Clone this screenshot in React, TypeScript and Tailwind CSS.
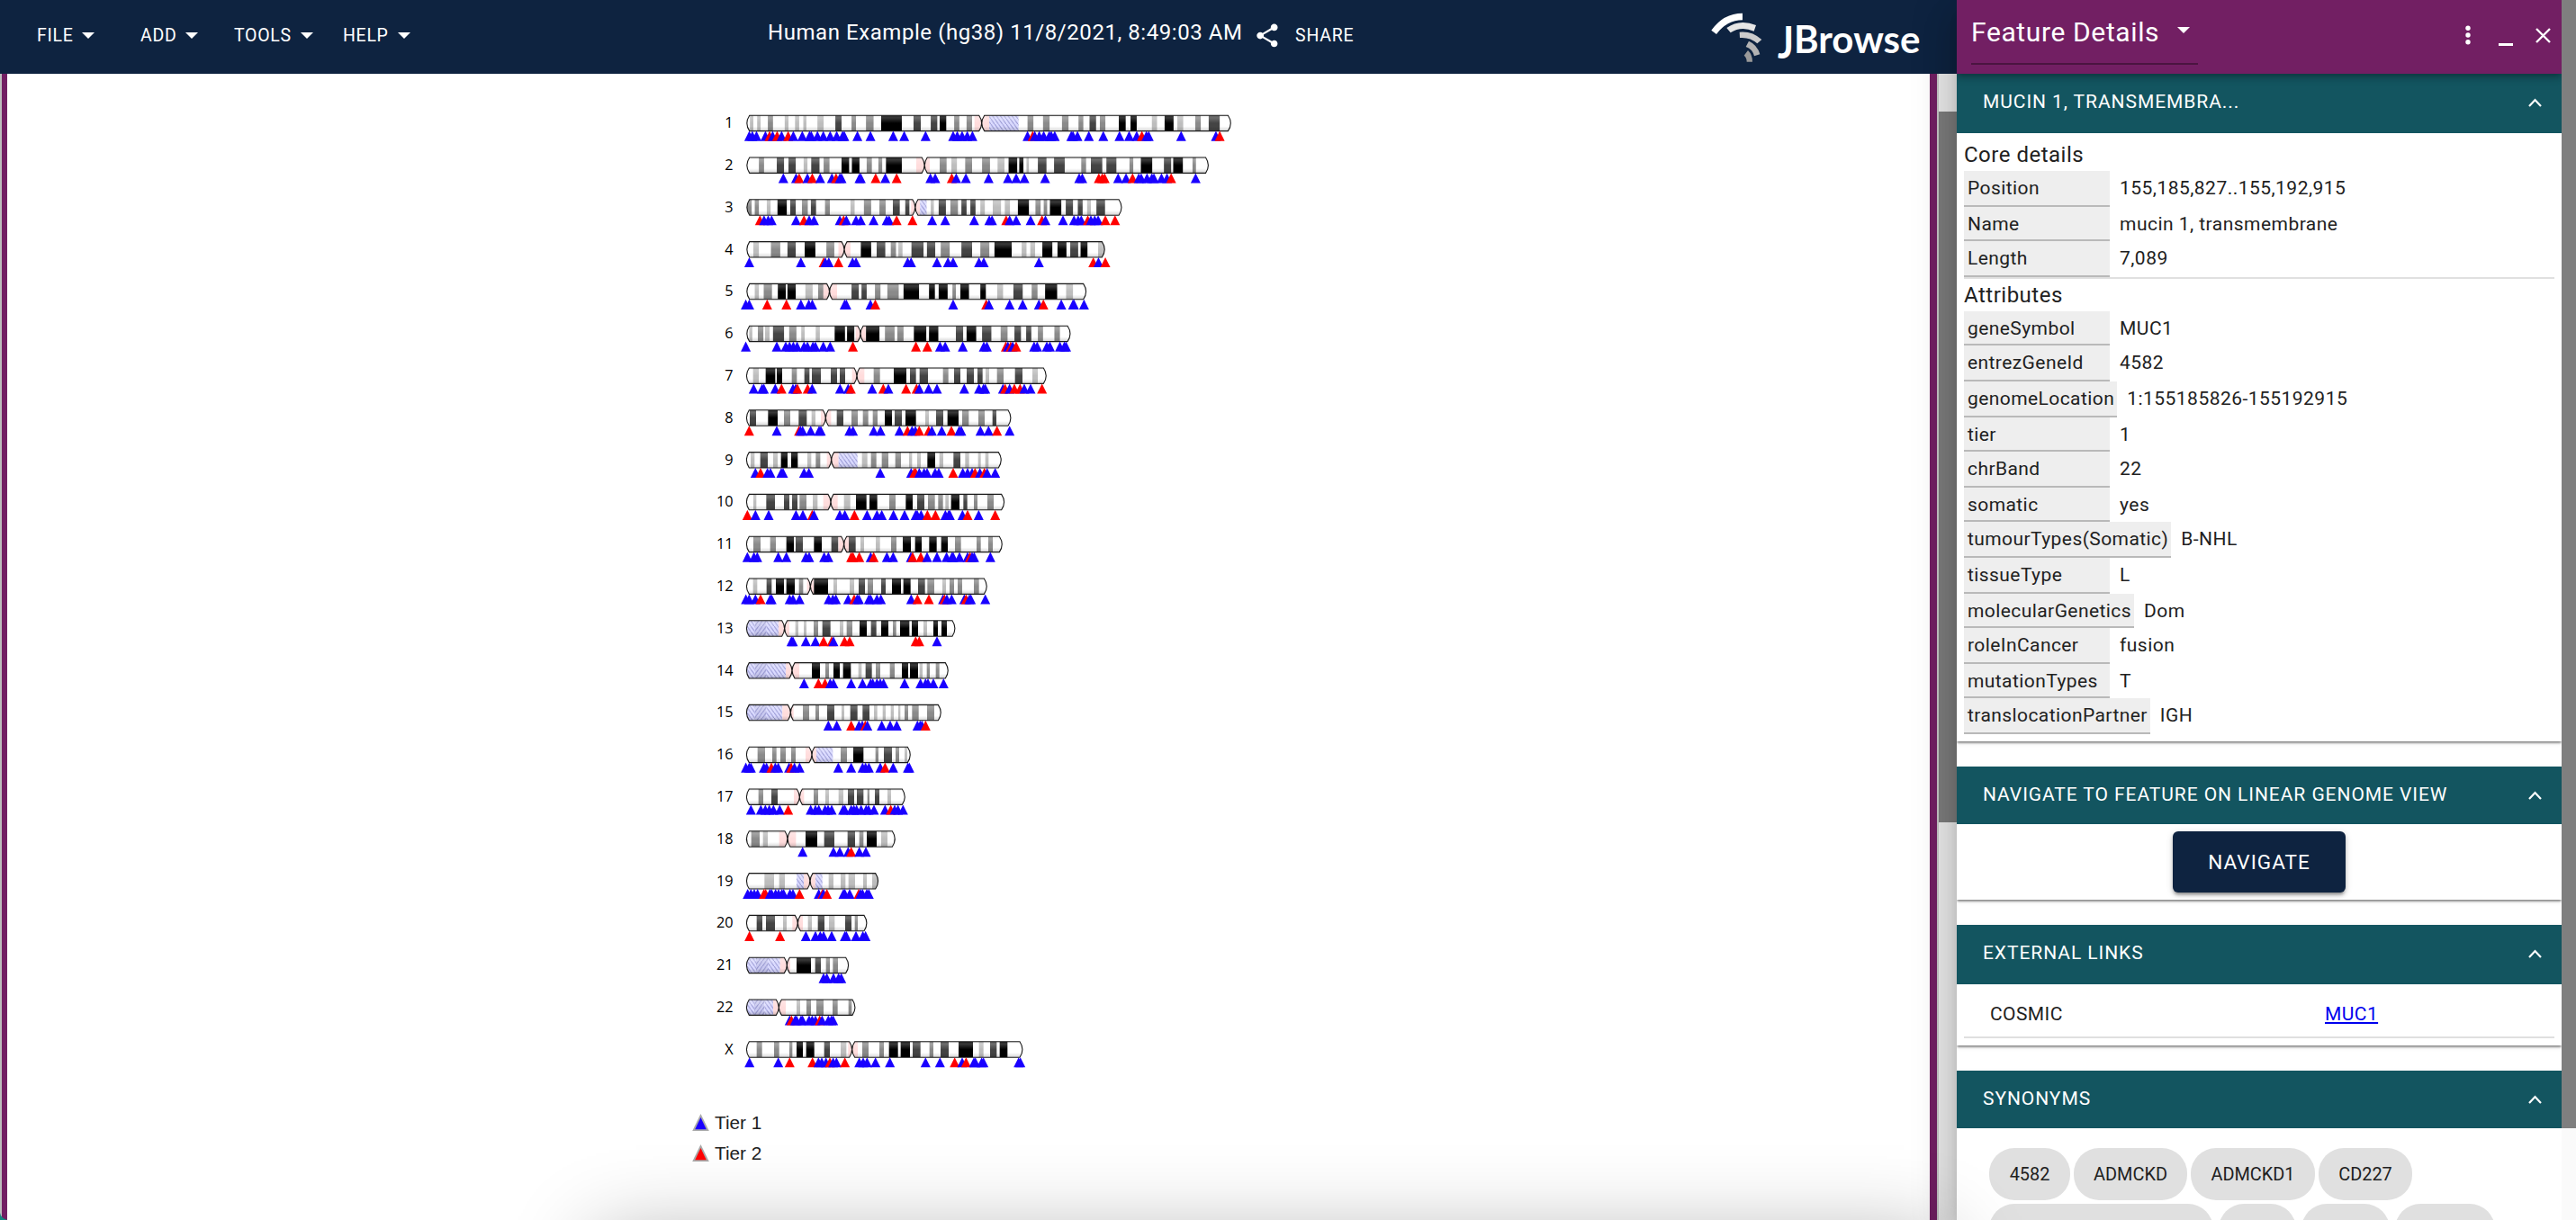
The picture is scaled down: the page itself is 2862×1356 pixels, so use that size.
import React from "react";

type Chromosome = {
  name: string;
  origin: number;
  scale: number;
  start: number;
  centromere: number;
  end: number;
  bands: string;
  marks: string;
};

const chr = (
  name: string,
  origin: number,
  scale: number,
  start: number,
  centromere: number,
  end: number,
  bands: string,
  marks: string
): Chromosome => ({ name, origin, scale, start, centromere, end, bands, marks });

const S = 2.6133;

const CHROMOSOMES: Chromosome[] = [
  chr("1", 780, S, 130, 812, 1535,
    "a139-149 a160-170 b191-206 a240-251 a270-282 a294-303 a335-353 c387-405 b434-447 b476-498 d520-580 c614-635 c664-683 d690-709 b732-747 b768-784 p791-834 h834-919 b945-962 b990-1009 b1045-1064 b1093-1107 c1125-1144 b1155-1171 d1210-1230 d1244-1262 a1306-1321 d1343-1369 a1380-1397 b1432-1448 c1471-1503",
    "B 137 146 158 184 R 196 B 205 R 218 B 231 R 250 B 265 291 312 317 335 352 372 391 408 413 451 489 555 587 649 729 741 755 770 785 945 R 960 B 966 979 992 1008 1014 1024 1072 1077 1090 1123 1165 1212 1240 1262 R 1277 B 1290 1297 1391 1492 R 1503"),
  chr("2", 780, S, 130, 646, 1470,
    "b165-180 c217-238 c251-272 a295-306 c317-341 b353-370 d405-427 d435-457 b478-493 b512-523 d534-580 p622-661 b690-710 a724-740 b764-784 b813-836 a858-878 d890-915 d921-933 a942-949 c975-1000 c1022-1053 b1101-1115 c1129-1162 c1174-1203 b1241-1252 d1274-1307 c1341-1362 d1368-1396 b1424-1434",
    "B 236 273 R 282 B 306 R 320 B 343 377 R 389 B 400 405 457 461 R 504 B 532 R 565 B 663 677 R 725 B 738 766 832 888 912 936 996 1095 1104 R 1152 1162 1169 B 1208 1231 R 1250 B 1268 1275 1292 1306 1312 1334 1350 R 1362 B 1433"),
  chr("3", 780, S, 130, 619, 1218,
    "b130-144 b153-165 a188-199 d219-246 c256-272 b290-307 c316-331 b357-371 a431-443 b470-491 b515-533 c554-574 c590-602 p607-633 h633-652 a664-673 c687-708 b721-743 c753-768 c779-794 a808-821 a844-868 a879-894 d917-949 b968-983 b992-1002 d1010-1043 c1056-1077 c1091-1105 a1118-1129 c1145-1170",
    "R 168 B 180 192 202 273 R 296 B 311 325 400 R 411 B 419 447 461 498 536 543 R 565 611 B 668 706 790 834 842 R 883 B 893 912 954 R 987 B 997 1048 1080 1092 1101 R 1120 B 1129 1140 1150 R 1171 1199"),
  chr("4", 780, S, 130, 413, 1169,
    "a149-165 b200-227 c248-272 d298-329 b361-384 p396-431 d461-491 c507-532 b548-563 a570-582 c608-643 c653-677 b693-719 c753-784 b808-834 d849-899 a928-942 a953-967 d988-1017 d1032-1058 c1069-1092 d1099-1119 a1150-1169",
    "B 137 287 R 353 B 358 368 R 396 B 437 447 597 607 682 714 729 804 818 978 R 1136 B 1151 R 1171"),
  chr("5", 780, S, 130, 370, 1115,
    "a153-165 b179-203 d220-243 d248-272 a300-321 b337-353 p352-392 c434-455 c463-478 b502-518 b538-571 d585-630 d659-676 d687-713 b727-737 d750-775 d808-824 a857-874 c904-931 b957-974 d996-1031 a1057-1077",
    "B 127 137 R 189 245 B 287 310 320 414 419 489 R 503 B 729 R 825 B 833 893 931 978 R 991 B 1043 1077 1080 1109"),
  chr("6", 780, S, 130, 460, 1069,
    "a137-146 b162-178 a183-196 c206-238 b253-274 a288-298 a330-342 d385-415 d421-442 p446-475 d476-515 b531-559 b567-585 d615-651 d659-686 c737-758 d768-796 c813-840 b867-887 c907-926 c941-956 b975-990 b1023-1039",
    "B 127 217 243 254 265 276 296 306 322 329 352 372 R 438 621 654 B 691 706 757 818 827 R 882 B 888 R 896 B 902 R 912 B 964 973 1001 1010 1039 1052 1057"),
  chr("7", 780, 3, 148, 516, 1147,
    "a170-189 d212-244 d249-267 b299-316 c341-358 c366-396 c429-450 c459-477 p500-541 b572-593 d639-681 c693-713 c725-753 b803-821 c840-861 c882-906 c918-935 a945-957 b983-1005 c1043-1068 a1101-1119",
    "B 172 200 206 244 R 265 B 303 312 R 318 352 B 367 460 487 R 496 B 567 R 604 B 621 R 680 715 B 724 755 783 874 923 938 944 1003 R 1010 B 1025 R 1041 1060 B 1074 1095 R 1133"),
  chr("8", 780, 3, 148, 412, 1029,
    "c159-180 d220-252 b273-294 c322-349 a365-378 p396-430 c449-471 b498-519 b536-554 b569-585 d609-633 c642-666 d678-713 a744-756 c780-804 d818-855 b867-889 b921-942 c968-981",
    "R 157 B 249 R 323 B 328 335 362 390 396 491 503 572 595 658 R 685 B 700 711 R 724 755 B 766 799 R 831 B 857 864 928 955 R 983 B 1025"),
  chr("9", 780, 3, 148, 431, 997,
    "a162-175 c194-219 a237-252 d263-285 d297-319 a351-364 b379-394 p416-455 h455-518 a533-551 b563-581 b599-621 b644-663 a690-700 a717-729 d751-777 a791-804 c838-861 a877-890 a920-929 a944-955",
    "B 178 R 195 B 218 228 264 270 340 356 594 697 R 707 712 B 724 740 750 777 789 R 837 B 869 885 900 R 910 B 926 R 941 B 950 977"),
  chr("10", 780, 3, 148, 429, 1007,
    "a171-181 c214-243 c273-291 c300-318 b325-348 a369-385 p404-452 a473-494 d513-548 d558-584 b624-645 d679-702 c717-741 b753-776 b787-803 a811-822 d830-858 c871-884 b906-918 b951-972",
    "R 151 B 178 222 313 336 R 367 B 373 459 476 R 508 B 550 583 599 638 675 712 717 730 R 751 778 B 811 822 826 868 R 885 B 922 R 977"),
  chr("11", 780, 3, 148, 473, 1000,
    "b171-195 b227-246 d281-306 c312-336 d373-399 c431-454 p455-489 c489-512 a528-540 a579-593 b630-648 d669-696 d710-732 d757-782 d797-819 b843-863 b915-929 b954-969",
    "B 151 173 184 254 281 346 357 407 421 R 497 503 524 B 562 R 572 B 616 637 696 R 702 729 B 750 783 815 833 837 858 885 R 893 B 900 907 961"),
  chr("12", 780, 3, 148, 361, 949,
    "a170-184 c215-232 d246-273 d281-309 b323-337 p350-373 d373-420 a438-450 a492-507 c522-543 b552-570 c597-612 d633-663 d671-695 c720-743 b751-774 a801-813 b825-840 b852-867 b906-923",
    "B 146 157 178 R 195 B 227 232 292 303 325 422 436 446 487 R 507 B 517 523 556 562 583 596 697 R 718 756 B 803 R 808 B 816 832 874 R 880 B 891 896 944"),
  chr("13", 780, 3, 148, 275, 843,
    "h148-177 H177-213 h213-255 p255-291 a311-321 a339-348 b372-387 c401-428 a459-471 b482-501 d525-549 c563-581 d597-621 b636-647 d660-691 d699-720 a738-750 d771-786 d798-816",
    "B 298 303 346 378 R 405 432 B 438 R 475 492 712 724 B 783"),
  chr("14", 780, 3, 148, 300, 820,
    "h148-177 H177-213 h213-279 p279-324 d366-393 b411-423 d438-459 d470-496 a521-532 c545-566 b579-594 b626-642 d666-687 d693-720 a725-735 b749-759 b779-791",
    "B 340 R 388 410 B 427 438 497 535 562 569 583 594 605 675 728 745 753 771 805"),
  chr("15", 780, 3, 148, 295, 796,
    "h148-177 H177-213 h213-268 p268-305 b336-357 b378-390 c417-441 a465-474 c494-518 c535-558 a573-584 a602-612 a629-639 a654-661 b675-687 b700-722 b750-774",
    "B 421 449 R 497 B 523 534 R 544 B 551 599 627 649 718 727 733 R 745"),
  chr("16", 780, 3, 148, 366, 694,
    "b185-210 b234-248 b261-279 b297-312 p345-381 h381-436 b462-483 d504-538 b578-588 c606-633 b645-657 a675-684",
    "B 146 157 163 206 215 R 231 B 244 254 290 R 297 B 308 325 454 497 535 545 556 594 R 610 B 637 686 691"),
  chr("17", 780, 3, 148, 325, 676,
    "b188-204 c231-252 p306-340 b372-387 a411-423 a455-471 c486-507 c516-538 b551-558 c576-591 a618-630",
    "B 163 196 211 224 238 259 R 287 B 362 378 389 410 420 432 470 476 497 506 515 530 547 555 573 610 R 629 B 642 653 670"),
  chr("18", 780, 3, 148, 285, 643,
    "b164-192 a203-219 p257-313 d345-384 c407-441 c485-510 b524-538 d549-582 a597-618",
    "B 335 438 459 487 R 497 B 524 546"),
  chr("19", 750, 3, 238, 450, 677,
    "a298-330 a347-366 h405-429 p429-468 h468-491 a512-528 a552-568 a578-600 a627-639 a657-677",
    "B 242 253 264 275 R 296 302 B 316 322 335 345 356 362 383 393 R 415 B 479 R 491 B 495 R 506 B 561 566 582 R 612 B 618 625 639 646"),
  chr("20", 750, 3, 238, 409, 639,
    "c272-291 c303-333 a360-372 p391-426 a443-456 c476-498 a513-532 c567-588 b599-609",
    "R 248 350 B 436 468 484 495 522 566 571 603 626 635"),
  chr("21", 750, 3, 238, 373, 578,
    "h238-270 H270-309 h309-350 p350-384 d405-453 c467-486 b503-516 b526-543",
    "B 495 506 528 545 554"),
  chr("22", 750, 3, 238, 346, 600,
    "h238-264 H264-298 h298-327 p327-369 a405-417 b438-453 b471-495 b525-542 b578-589",
    "B 382 R 388 B 400 405 420 425 447 457 468 R 482 B 490 511 521 527"),
  chr("X", 750, 3, 238, 590, 1158,
    "b272-290 b330-347 b381-391 d405-426 d437-464 c497-516 a552-571 p577-609 b624-645 b681-696 d713-743 d752-783 c792-818 b848-861 c885-912 d945-993 a1013-1028 c1050-1072 d1082-1108",
    "B 248 344 R 382 458 B 478 489 503 R 516 B 527 538 R 566 B 614 627 640 668 716 835 883 R 932 B 957 R 970 B 996 1001 1022 1028 1145 1151"),
];

const FILLS: Record<string, string> = {
  a: "#bdbdbd",
  b: "#8a8a8a",
  c: "#444444",
  d: "#000000",
  p: "#ffdcdc",
  h: "url(#hatch)",
  H: "url(#hatchBack)",
};

const BODY = 17.4;

const armPath = (x1: number, x2: number, y: number) => {
  const b = y + BODY;
  const m = y + BODY / 2;
  return `M${x1 + 3} ${y}H${x2 - 3}Q${x2 + 2.8} ${m} ${x2 - 3} ${b}H${x1 + 3}Q${x1 - 2.8} ${m} ${x1 + 3} ${y}Z`;
};

function Ideogram({ c, y }: { c: Chromosome; y: number }) {
  const px = (v: number) => c.origin + v / c.scale;
  const arms = armPath(px(c.start), px(c.centromere), y) + armPath(px(c.centromere), px(c.end), y);
  let color = "B";
  const marks: { x: number; color: string }[] = [];
  for (const t of c.marks.split(" ")) {
    if (t === "B" || t === "R") color = t;
    else marks.push({ x: px(Number(t)), color });
  }
  return (
    <g>
      <text x={814.6} y={y + 14} textAnchor="end" fontSize={16.3} fontFamily="'Open Sans', sans-serif" fill="#000">
        {c.name}
      </text>
      <clipPath id={`arms-${c.name}`}>
        <path d={arms} />
      </clipPath>
      <g clipPath={`url(#arms-${c.name})`}>
        {c.bands.split(" ").map((band) => {
          const [from, to] = band.slice(1).split("-").map(Number);
          return <rect key={band} x={px(from)} y={y} width={(to - from) / c.scale} height={BODY} fill={FILLS[band[0]]} />;
        })}
        <rect x={px(c.start)} y={y} width={px(c.end) - px(c.start)} height={BODY} fill="url(#gloss)" />
      </g>
      <path d={arms} fill="none" stroke="#1a1a1a" strokeWidth={1.1} />
      {marks.map((m, i) => (
        <path key={i} d={`M${m.x} ${y + 17.4}L${m.x + 5.5} ${y + 28.5}H${m.x - 5.5}Z`} fill={m.color === "B" ? "#1900ff" : "#ff0000"} />
      ))}
    </g>
  );
}

function Karyotype() {
  return (
    <svg className="ml-[752px] block shrink-0" width={640} height={1080} viewBox="760 120 640 1080">
      <defs>
        <linearGradient id="gloss" x1="0" x2="0" y1="0" y2="1">
          <stop offset="0" stopColor="#888" stopOpacity="0.25" />
          <stop offset="0.15" stopColor="#fff" stopOpacity="0.22" />
          <stop offset="0.5" stopColor="#fff" stopOpacity="0" />
          <stop offset="0.7" stopColor="#000" stopOpacity="0" />
          <stop offset="1" stopColor="#000" stopOpacity="0.17" />
        </linearGradient>
        <pattern id="hatch" width="4.3" height="6" patternUnits="userSpaceOnUse">
          <rect width="4.3" height="6" fill="#dadaff" />
          <path d="M0 0L4.3 6" stroke="#9494d0" strokeWidth="1" />
        </pattern>
        <pattern id="hatchBack" width="4.3" height="6" patternUnits="userSpaceOnUse">
          <rect width="4.3" height="6" fill="#cacaf0" />
          <path d="M4.3 0L0 6" stroke="#9090cc" strokeWidth="1" />
        </pattern>
      </defs>
      {CHROMOSOMES.map((c, i) => (
        <Ideogram key={c.name} c={c} y={128.2 + i * 46.8} />
      ))}
    </svg>
  );
}

function DropArrow({ className }: { className: string }) {
  return (
    <svg className={className} width={14} height={7} viewBox="0 0 14 7">
      <path d="M0 0H14L7 7Z" fill="#fff" />
    </svg>
  );
}

function MenuButton({ label, className }: { label: string; className: string }) {
  return (
    <div className={`flex text-[19.5px] leading-[79px] tracking-[0.7px] ${className}`}>
      <span>{label}</span>
      <DropArrow className="mt-9 ml-2.5" />
    </div>
  );
}

function Logo() {
  return (
    <div className="ml-auto flex w-[274px] shrink-0">
      <svg className="mt-3 shrink-0" width={60} height={60} viewBox="57 36 180 180">
        <path d="M61 101Q101 44 165 44V67Q112 68 78 114Z" fill="#fff" />
        <path d="M112 93Q155 62 210 84L203 104Q160 86 125 109Z" fill="#e6e6e6" />
        <path d="M155 107Q197 103 229 132L214 145Q190 123 156 126Z" fill="#ccc" />
        <path d="M186 137Q214 149 223 181L204 187Q198 163 176 156Z" fill="#b3b3b3" />
        <path d="M183 168Q198 182 198 206H179Q179 192 170 185Z" fill="#999" />
      </svg>
      <span className="ml-[15px] h-[82px] font-['Lato'] text-[42px] leading-[87px] font-bold whitespace-nowrap">
        <span className="inline-block origin-[50%_33%] scale-y-[1.2]">J</span>Browse
      </span>
    </div>
  );
}

function AppBar() {
  return (
    <header className="flex h-[82px] w-[2174px] shrink-0 items-start overflow-hidden bg-[#0e2340] text-white">
      <div className="flex w-[853px] shrink-0 pl-[41px]">
        <MenuButton label="FILE" className="w-[115px]" />
        <MenuButton label="ADD" className="w-[104px]" />
        <MenuButton label="TOOLS" className="w-[121px]" />
        <MenuButton label="HELP" className="w-[100px]" />
      </div>
      <span className="w-[542px] text-[24px] leading-[72px] tracking-[0.56px] whitespace-nowrap">
        Human Example (hg38) 11/8/2021, 8:49:03 AM
      </span>
      <svg className="mt-[24px] shrink-0" width={31} height={31} viewBox="2 0 24 24" fill="#fff">
        <path d="M18 16.08c-.76 0-1.44.3-1.96.77L8.91 12.7c.05-.23.09-.46.09-.7s-.04-.47-.09-.7l7.05-4.11c.54.5 1.25.81 2.04.81 1.66 0 3-1.34 3-3s-1.34-3-3-3-3 1.34-3 3c0 .24.04.47.09.7L8.04 9.81C7.5 9.31 6.79 9 6 9c-1.66 0-3 1.34-3 3s1.34 3 3 3c.79 0 1.5-.31 2.04-.81l7.12 4.16c-.05.21-.08.43-.08.65 0 1.61 1.31 2.92 2.92 2.92s2.92-1.31 2.92-2.92-1.31-2.92-2.92-2.92z" />
      </svg>
      <span className="ml-[13px] text-[19.5px] leading-[79px] tracking-[0.8px]">SHARE</span>
      <Logo />
    </header>
  );
}

function SectionHeader({ title, className }: { title: string; className: string }) {
  return (
    <div className={`flex shrink-0 justify-between bg-[#135560] pr-[22px] pl-[29px] text-[21px] leading-[62px] tracking-[0.93px] text-white ${className}`}>
      <span>{title}</span>
      <svg className="mt-[27px]" width={15} height={10} viewBox="0 0 15 10">
        <path d="M1 9L7.5 2L14 9" fill="none" stroke="#fff" strokeWidth="2.2" />
      </svg>
    </div>
  );
}

function Field({ label, value, tall }: { label: string; value: string; tall: boolean }) {
  return (
    <div className={`flex text-[21px] leading-[38px] ${tall ? "h-10" : "h-[38px]"}`}>
      <span className="h-full min-w-[162px] border-b-2 border-[#b9b9b9] bg-[#eeeeee] pr-[3px] pl-[4px] tracking-[0.42px]">{label}</span>
      <span className="ml-[11px] tracking-[0.47px]">{value}</span>
    </div>
  );
}

function Card({ className, children }: { className: string; children: React.ReactNode }) {
  return (
    <section className={`flex shrink-0 flex-col bg-white shadow-[0_3px_2px_-1px_rgba(0,0,0,0.3),0_1px_2px_rgba(0,0,0,0.2),0_2px_5px_rgba(0,0,0,0.12)] ${className}`}>
      {children}
    </section>
  );
}

function Chip({ label, className }: { label: string; className: string }) {
  return (
    <span className={`h-[58px] shrink-0 rounded-[28px] bg-[#e0e0e0] text-center text-[19.9px] leading-[59px] ${className}`}>{label}</span>
  );
}

const ATTRIBUTES: [string, string, boolean][] = [
  ["geneSymbol", "MUC1", false],
  ["entrezGeneId", "4582", true],
  ["genomeLocation", "1:155185826-155192915", true],
  ["tier", "1", false],
  ["chrBand", "22", true],
  ["somatic", "yes", false],
  ["tumourTypes(Somatic)", "B-NHL", true],
  ["tissueType", "L", true],
  ["molecularGenetics", "Dom", false],
  ["roleInCancer", "fusion", true],
  ["mutationTypes", "T", false],
  ["translocationPartner", "IGH", true],
];

function FeaturePanel() {
  return (
    <aside className="relative z-10 flex h-[1356px] w-[688px] shrink-0 bg-white shadow-[0_12px_15px_-8px_rgba(0,0,0,0.2),0_24px_36px_3px_rgba(0,0,0,0.14),0_9px_45px_8px_rgba(0,0,0,0.12)]">
      <div className="flex h-[1356px] w-[672px] shrink-0 flex-col overflow-hidden text-[#212121]">
        <div className="relative z-10 flex h-[82px] shrink-0 items-start bg-[#721f63] pl-4 text-white shadow-[0_3px_6px_-1px_rgba(0,0,0,0.25),0_6px_8px_rgba(0,0,0,0.14)]">
          <div className="flex h-[72px] w-[252px] border-b-2 border-[#4a1440] text-[30px] leading-[71px] tracking-[0.62px] whitespace-nowrap">
            <span className="w-[207px]">Feature Details</span>
            <DropArrow className="mt-[30px] ml-[22px]" />
          </div>
          <svg className="mt-7 ml-auto" width={6} height={22} viewBox="0 0 6 22" fill="#fff">
            <circle cx="3" cy="3.3" r="2.7" />
            <circle cx="3" cy="11" r="2.7" />
            <circle cx="3" cy="18.7" r="2.7" />
          </svg>
          <span className="mt-12 ml-[31px] h-[3px] w-4 bg-white" />
          <svg className="mt-[31px] mr-[12px] ml-[25px]" width={17} height={17} viewBox="0 0 17 17">
            <path d="M1 1L16 16M16 1L1 16" stroke="#fff" strokeWidth="2.4" />
          </svg>
        </div>

        <Card className="h-[742px]">
          <SectionHeader title="MUCIN 1, TRANSMEMBRA..." className="h-[66px]" />
          <div className="flex flex-col px-2">
            <h2 className="h-[42px] text-[24px] leading-[48px] tracking-[0.5px]">Core details</h2>
            <Field label="Position" value="155,185,827..155,192,915" tall />
            <Field label="Name" value="mucin 1, transmembrane" tall={false} />
            <Field label="Length" value="7,089" tall />
            <hr className="h-[2px] border-0 bg-[#e0e0e0]" />
            <h2 className="h-9 text-[24px] leading-9 tracking-[0.5px]">Attributes</h2>
            {ATTRIBUTES.map(([label, value, tall]) => (
              <Field key={label} label={label} value={value} tall={tall} />
            ))}
          </div>
        </Card>

        <Card className="mt-7 h-[148px]">
          <SectionHeader title="NAVIGATE TO FEATURE ON LINEAR GENOME VIEW" className="h-16" />
          <button className="mt-2 h-[68px] w-48 self-center rounded-md bg-[#0e2340] pt-px text-[22.5px] tracking-[1.05px] text-white shadow-[0_4px_3px_-2px_rgba(0,0,0,0.25),0_3px_4px_rgba(0,0,0,0.18),0_2px_8px_rgba(0,0,0,0.14)]">
            NAVIGATE
          </button>
        </Card>

        <Card className="mt-7 h-[134px]">
          <SectionHeader title="EXTERNAL LINKS" className="h-[66px]" />
          <div className="mx-2 flex h-[60px] border-b-2 border-[#e0e0e0] pl-[29px] text-[21px] leading-[66px] tracking-[0.42px]">
            <span className="w-[372px]">COSMIC</span>
            <a className="text-[#0000ee] underline decoration-2 underline-offset-[2px]">MUC1</a>
          </div>
        </Card>

        <Card className="mt-7 h-[300px]">
          <SectionHeader title="SYNONYMS" className="h-16" />
          <div className="mt-[22px] flex gap-1 pl-9">
            <Chip label="4582" className="w-[90px]" />
            <Chip label="ADMCKD" className="w-[126px]" />
            <Chip label="ADMCKD1" className="w-[138px]" />
            <Chip label="CD227" className="w-[104px]" />
          </div>
          <div className="mt-1 flex gap-[6px] pl-9">
            <Chip label="" className="w-[249px]" />
            <Chip label="" className="w-[86px]" />
            <Chip label="" className="w-[98px]" />
            <Chip label="" className="w-[111px]" />
          </div>
        </Card>
      </div>
      <div className="h-[1356px] w-4 bg-[#fafafa]">
        <div className="h-[1254px] bg-[#7f7f7f]" />
      </div>
    </aside>
  );
}

function LegendItem({ label, color }: { label: string; color: string }) {
  return (
    <div className="flex h-[34px] items-center pl-[761px] font-['Liberation_Sans'] text-[20.8px] text-[#212121]">
      <svg width={19} height={19} viewBox="0 0 19 19">
        <path d="M9.5 0L18.8 19H0.2Z" fill="#aaa" />
        <path d="M9.5 4L15.8 17.2H3.2Z" fill={color} />
      </svg>
      <span className="mt-[2px] ml-[6px] whitespace-nowrap">{label}</span>
    </div>
  );
}

export default function App() {
  return (
    <div className="relative flex h-[1356px] w-[2862px] overflow-hidden bg-white font-['Roboto',sans-serif]">
      <div className="flex w-[2174px] shrink-0 flex-col">
        <AppBar />
        <main className="flex h-[1274px] border-l-2 border-[#bdbdbd]">
          <div className="flex w-[2150px] shrink-0 flex-col border-l-6 border-r-8 border-[#721f63] bg-white pt-[38px]">
            <Karyotype />
            <div className="mt-[30px] flex flex-col">
              <LegendItem label="Tier 1" color="#1900ff" />
              <LegendItem label="Tier 2" color="#ff0000" />
            </div>
          </div>
          <div className="flex w-[22px] flex-col border-l-2 border-[#c4c4c4] bg-[#ececec] pt-[42px]">
            <div className="h-[790px] bg-[#7d7d7d]" />
          </div>
        </main>
      </div>
      <FeaturePanel />
      <div className="absolute top-[1376px] left-[662px] z-20 h-[300px] w-[1498px] shadow-[0_0_90px_rgba(0,0,0,0.32)]" />
      <svg className="absolute bottom-0 left-0" width={8} height={8} viewBox="0 0 8 8">
        <path d="M0 0Q1 6 8 8H0Z" fill="#13877f" />
      </svg>
    </div>
  );
}
